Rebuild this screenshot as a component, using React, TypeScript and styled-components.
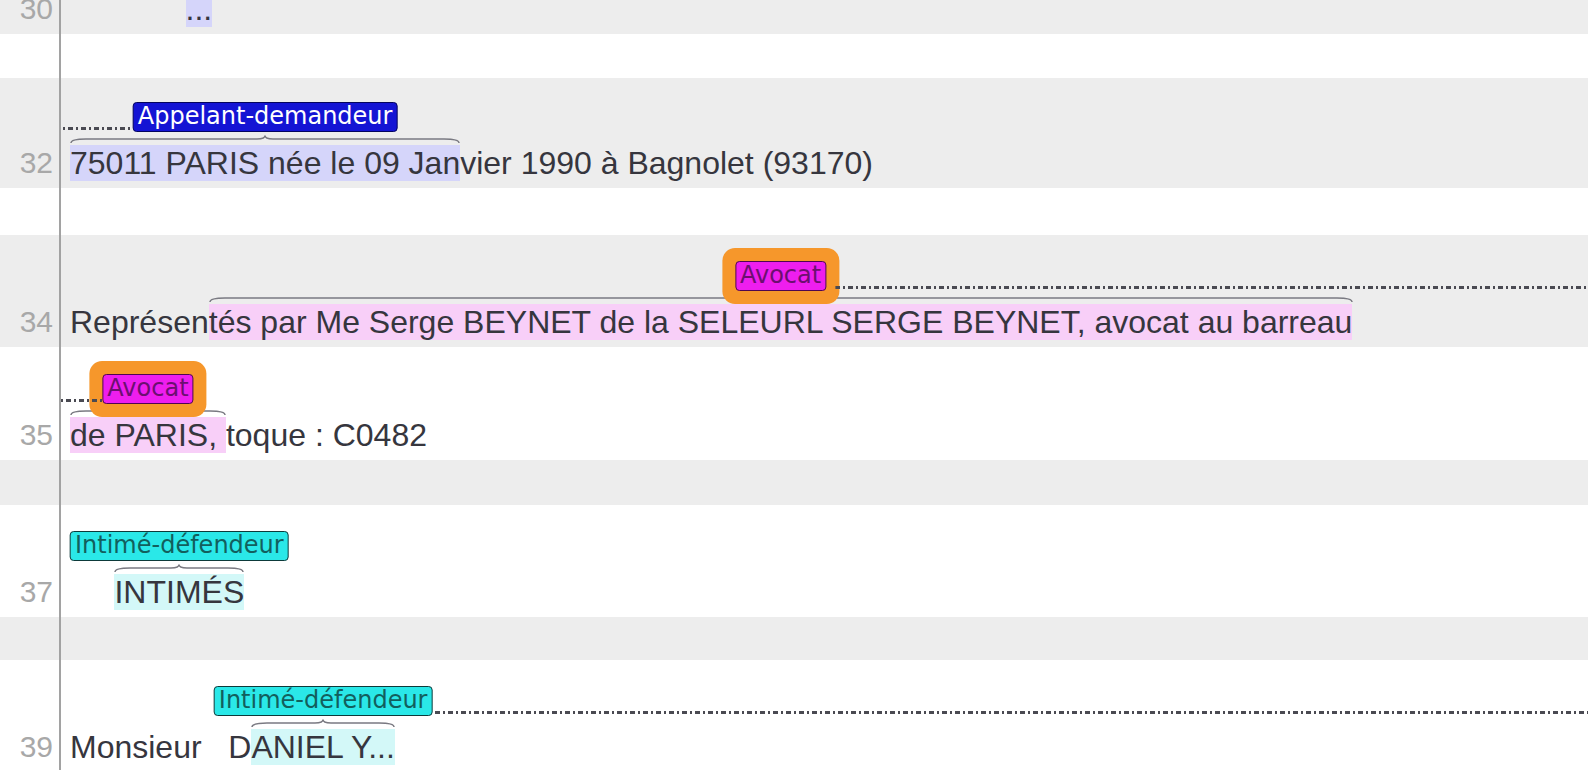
import React, { useLayoutEffect, useRef, useState } from "react";
import styled, { createGlobalStyle } from "styled-components";

type Tone = "blue" | "pink" | "cyan";

const tones: Record<Tone, { hl: string; bg: string; border: string; fg: string }> = {
  blue: { hl: "#d5d5fa", bg: "#1414d4", border: "#04045e", fg: "#ffffff" },
  pink: { hl: "#f8cff8", bg: "#ee1eee", border: "#4e0650", fg: "#6c0f70" },
  cyan: { hl: "#d3f8f8", bg: "#2ae8e8", border: "#0d3a3a", fg: "#125f5d" },
};

const GlobalStyle = createGlobalStyle`
  html, body {
    margin: 0;
    padding: 0;
    background: #fff;
    overflow: hidden;
  }
`;

// brace drawn from the measured span width
const Brace: React.FC = () => {
  const ref = useRef<HTMLDivElement>(null);
  const [w, setW] = useState(0);

  useLayoutEffect(() => {
    if (ref.current) setW(ref.current.offsetWidth);
  }, []);

  const c = w / 2;
  const e = Math.min(16, w / 6);
  const d = w
    ? `M1,9 C1,6 ${e * 0.4},5 ${e},5 L${c - 8},5 C${c - 3},5 ${c},4 ${c},1.5 C${c},4 ${c + 3},5 ${c + 8},5 L${w - e},5 C${w - e * 0.4},5 ${w - 1},6 ${w - 1},9`
    : "";

  return (
    <BraceBox ref={ref}>
      <svg width={w} height={10}>
        <path d={d} fill="none" stroke="#7a7a82" strokeWidth={1.5} />
      </svg>
    </BraceBox>
  );
};

const Annot: React.FC<{
  tone: Tone;
  label?: string;
  arc?: "left" | "right";
  halo?: boolean;
  children: React.ReactNode;
}> = ({ tone, label, arc, halo, children }) => {
  return (
    <Hl $tone={tone}>
      {label && <Brace />}
      {label && (
        <Label $tone={tone} $halo={!!halo}>
          {label}
          {arc && <Arc $side={arc} $halo={!!halo} />}
        </Label>
      )}
      {children}
    </Hl>
  );
};

const App: React.FC = () => {
  return (
    <>
      <GlobalStyle />
      <Page>
        <Row $shade $h={34}>
          <LineNo>30</LineNo>
          <Content>
            <Line>
              {"             "}
              <Annot tone="blue">...</Annot>
            </Line>
          </Content>
        </Row>
        <Row $h={44}>
          <LineNo />
          <Content />
        </Row>
        <Row $shade $h={110}>
          <LineNo>32</LineNo>
          <Content>
            <Line>
              <Annot tone="blue" label="Appelant-demandeur" arc="left">
                75011 PARIS née le 09 Jan
              </Annot>
              vier 1990 à Bagnolet (93170)
            </Line>
          </Content>
        </Row>
        <Row $h={47}>
          <LineNo />
          <Content />
        </Row>
        <Row $shade $h={112}>
          <LineNo>34</LineNo>
          <Content>
            <Line>
              Représen
              <Annot tone="pink" label="Avocat" arc="right" halo>
                tés par Me Serge BEYNET de la SELEURL SERGE BEYNET, avocat au barreau
              </Annot>
            </Line>
          </Content>
        </Row>
        <Row $h={113}>
          <LineNo>35</LineNo>
          <Content>
            <Line>
              <Annot tone="pink" label="Avocat" arc="left" halo>
                {"de PARIS, "}
              </Annot>
              toque : C0482
            </Line>
          </Content>
        </Row>
        <Row $shade $h={45}>
          <LineNo />
          <Content />
        </Row>
        <Row $h={112}>
          <LineNo>37</LineNo>
          <Content>
            <Line>
              {"     "}
              <Annot tone="cyan" label="Intimé-défendeur">
                INTIMÉS
              </Annot>
            </Line>
          </Content>
        </Row>
        <Row $shade $h={43}>
          <LineNo />
          <Content />
        </Row>
        <Row $h={112}>
          <LineNo>39</LineNo>
          <Content>
            <Line>
              {"Monsieur   D"}
              <Annot tone="cyan" label="Intimé-défendeur" arc="right">
                ANIEL Y...
              </Annot>
            </Line>
          </Content>
        </Row>
      </Page>
    </>
  );
};

// 스타일
const Page = styled.div`
  width: 100%;
  font-family: "Liberation Sans", Arial, sans-serif;
  color: #36363e;
`;

const Row = styled.div<{ $shade?: boolean; $h: number }>`
  display: flex;
  height: ${(p) => p.$h}px;
  background: ${(p) => (p.$shade ? "#ededed" : "#ffffff")};
`;

const LineNo = styled.div`
  flex: none;
  width: 61px;
  box-sizing: border-box;
  display: flex;
  align-items: flex-end;
  justify-content: flex-end;
  padding: 0 6px 7px 0;
  border-right: 2px solid #a2a2a2;
  font-size: 30px;
  line-height: 36px;
  color: #a8a8a8;
`;

const Content = styled.div`
  flex: 1;
  min-width: 0;
  display: flex;
  align-items: flex-end;
  padding: 0 0 7px 9px;
  overflow: hidden;
`;

const Line = styled.div`
  white-space: pre;
  font-size: 32px;
  line-height: 36px;
`;

const Hl = styled.span<{ $tone: Tone }>`
  position: relative;
  background: ${(p) => tones[p.$tone].hl};
`;

const BraceBox = styled.div`
  position: absolute;
  left: 0;
  right: 0;
  bottom: calc(100% + 1px);
  height: 10px;
  line-height: 0;
  svg {
    display: block;
  }
`;

const Label = styled.div<{ $tone: Tone; $halo: boolean }>`
  position: absolute;
  bottom: calc(100% + 13px);
  left: 50%;
  transform: translateX(-50%);
  z-index: 2;
  height: 30px;
  box-sizing: border-box;
  padding: 0 4px;
  border: 1.5px solid ${(p) => tones[p.$tone].border};
  border-radius: 4px;
  background: ${(p) => tones[p.$tone].bg};
  color: ${(p) => tones[p.$tone].fg};
  font-family: "DejaVu Sans", sans-serif;
  font-size: 24px;
  line-height: 27px;
  white-space: nowrap;
  box-shadow: ${(p) => (p.$halo ? "0 0 0 13px #f6972b" : "none")};
`;

const Arc = styled.div<{ $side: "left" | "right"; $halo: boolean }>`
  position: absolute;
  bottom: 1px;
  width: 2000px;
  height: 3px;
  ${(p) =>
    p.$side === "right"
      ? `left: calc(100% + ${p.$halo ? 10 : 3}px);`
      : `right: calc(100% + ${p.$halo ? 0 : 3}px);`}
  background-image: repeating-linear-gradient(
    to right,
    #4a4a52 0 5px,
    transparent 5px 8px,
    #4a4a52 8px 10px,
    transparent 10px 13px
  );
`;

export default App;
